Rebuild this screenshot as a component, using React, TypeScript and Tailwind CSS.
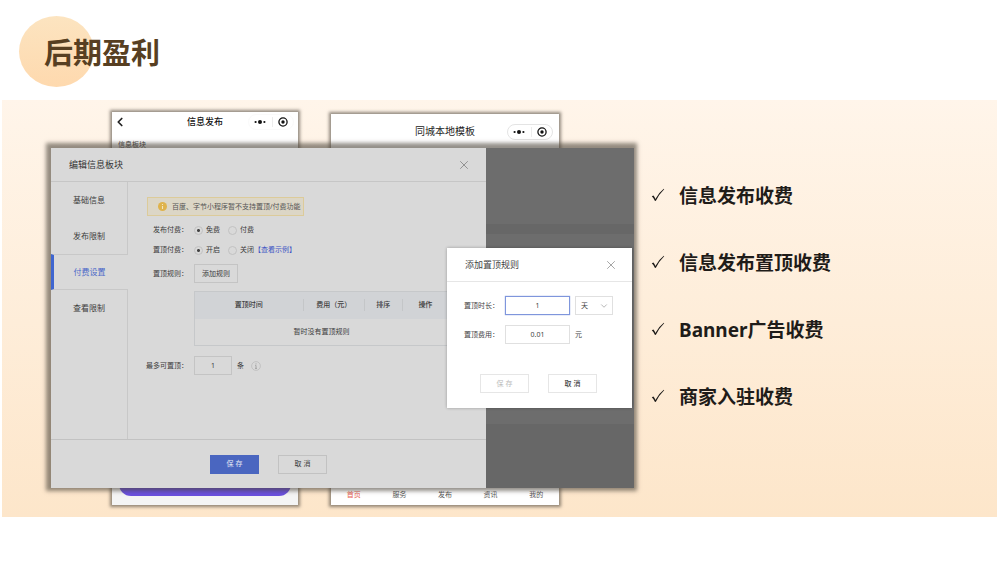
import type { ReactNode } from "react";
import { ChevronDown, ChevronLeft, X } from "lucide-react";

const benefits = ["信息发布收费", "信息发布置顶收费", "Banner广告收费", "商家入驻收费"];
const sections = ["基础信息", "发布限制", "付费设置", "查看限制"];
const tabs = ["首页", "服务", "发布", "资讯", "我的"];

const frameShadow = "shadow-[0_0_3px_2px_rgba(75,68,58,0.6)]";

function Tick() {
  return (
    <svg viewBox="0 0 14 14" className="w-3.5 h-3.5 mb-1 shrink-0" aria-hidden="true">
      <path d="M0.8 8.2 L2.4 7.4 Q3.6 8.8 4.4 11 Q7.8 4.6 12.8 0.8 L13.2 1.2 Q8 6.2 4.9 12.8 L4 13 Q2.6 9.8 0.8 8.2Z" fill="#1c1a18" />
    </svg>
  );
}

function Capsule({ outlined = false }: { outlined?: boolean }) {
  return (
    <div className={`flex items-center justify-between w-[46px] h-4 px-[5px] rounded-full border ${outlined ? "border-[#e4e4e4]" : "border-[#fafafa]"}`}>
      <svg viewBox="0 0 12 6" className="w-3 h-1.5" fill="#111" aria-hidden="true">
        <circle cx="1.6" cy="3" r="1.1" />
        <circle cx="6" cy="3" r="2" />
        <circle cx="10.4" cy="3" r="1.1" />
      </svg>
      <span className="w-px h-2.5 bg-[#ececec]" />
      <svg viewBox="0 0 10 10" className="w-2.5 h-2.5" aria-hidden="true">
        <circle cx="5" cy="5" r="4.1" fill="none" stroke="#111" strokeWidth="1.3" />
        <circle cx="5" cy="5" r="1.7" fill="#111" />
      </svg>
    </div>
  );
}

function PublishPhone() {
  return (
    <div className={`flex flex-col w-[186px] bg-[#f4f4f4] ${frameShadow}`}>
      <div className="bg-white pb-5">
        <div className="relative flex items-center justify-between h-5 pl-px">
          <button type="button" aria-label="返回">
            <ChevronLeft className="w-3.5 h-3.5 text-[#222]" strokeWidth={3} />
          </button>
          <h2 className="absolute inset-x-0 text-center text-[9px] font-medium text-[#111] pointer-events-none">信息发布</h2>
          <div className="pr-1"><Capsule /></div>
        </div>
        <p className="mt-2 pl-1.5 text-[7px] leading-[10px] text-[#444]">信息板块</p>
      </div>
      <button type="button" className="mt-auto mx-[7px] mb-[9px] h-6 rounded-full bg-[#6a50de] text-white text-[7px] leading-[10px]">
        立即发布
      </button>
    </div>
  );
}

function HomePhone() {
  return (
    <div className={`flex flex-col flex-1 mt-0.5 bg-white ${frameShadow}`}>
      <div className="relative flex items-center justify-end h-[35px] pr-1.5">
        <h2 className="absolute inset-x-0 text-center text-[10px] text-[#222]">同城本地模板</h2>
        <Capsule outlined />
      </div>
      <nav className="mt-auto flex pb-[5px]">
        {tabs.map((t, i) => (
          <a key={t} href="#" className={`flex-1 text-center text-[7px] leading-[10px] ${i === 0 ? "text-[#e8604f]" : "text-[#555]"}`}>
            {t}
          </a>
        ))}
      </nav>
    </div>
  );
}

function Row({ label, htmlFor, className = "h-5", children }: { label: string; htmlFor?: string; className?: string; children: ReactNode }) {
  return (
    <div className={`flex items-center ${className}`}>
      <label htmlFor={htmlFor} className="w-[60px] mr-1.5 shrink-0 text-right whitespace-nowrap">{label}：</label>
      {children}
    </div>
  );
}

function Radio({ name, label, checked = false }: { name: string; label: string; checked?: boolean }) {
  return (
    <label className="flex items-center gap-[3px]">
      <input
        type="radio"
        name={name}
        defaultChecked={checked}
        className="appearance-none w-[9px] h-[9px] rounded-full border border-[#c2c2c2] checked:bg-[radial-gradient(circle,#444_1px,transparent_2px)]"
      />
      {label}
    </label>
  );
}

function SettingsPanel() {
  return (
    <section className="flex flex-col flex-1 min-w-0 bg-[#d9d9d9] text-[7px] leading-[10px] text-[#3c3c3c]">
      <header className="flex items-center justify-between h-[34px] pl-[18px] pr-[15px] border-b border-[#c6c6c6]">
        <h2 className="text-[9px] text-[#333]">编辑信息板块</h2>
        <button type="button" aria-label="关闭">
          <X className="w-3.5 h-3.5 text-[#888]" strokeWidth={1.5} />
        </button>
      </header>

      <div className="flex">
        <nav className="flex flex-col w-[77px] shrink-0 text-[8px]">
          {sections.map((s) => (
            <a
              key={s}
              href="#"
              className={`flex items-center justify-center h-9 ${s === "付费设置" ? "border-y border-y-[#c8c8c8] border-l-[3px] border-l-[#3f66d0] pr-[3px] text-[#4a68c8]" : "border-r border-[#c8c8c8]"}`}
            >
              {s}
            </a>
          ))}
          <div className="flex-1 border-r border-[#c8c8c8]" />
        </nav>

        <form className="flex-1 min-w-0 pt-[15px] pb-16">
          <div className="flex items-center gap-[5px] w-fit h-[19px] ml-[19px] pl-2.5 pr-0.5 mb-1 border border-[#dccb9a] bg-[#dcd6c6] whitespace-nowrap text-[#555]">
            <svg viewBox="0 0 10 10" className="w-[9px] h-[9px]" aria-hidden="true">
              <circle cx="5" cy="5" r="5" fill="#dfb34c" />
              <path d="M5 2.2v1.2M5 4.4v3.4" stroke="#f3e6c0" strokeWidth="1.2" />
            </svg>
            百度、字节小程序暂不支持置顶/付费功能
          </div>
          <Row label="发布付费">
            <div className="flex gap-2">
              <Radio name="publish" label="免费" checked />
              <Radio name="publish" label="付费" />
            </div>
          </Row>
          <Row label="置顶付费">
            <div className="flex gap-2">
              <Radio name="top" label="开启" checked />
              <Radio name="top" label="关闭" />
            </div>
            <a href="#" className="text-[#3e55c4]">【查看示例】</a>
          </Row>
          <Row label="置顶规则" className="mt-1 h-[19px]">
            <button type="button" className="w-[44px] h-[19px] border border-[#c4c4c4]">添加规则</button>
          </Row>
          <div className="mt-2 ml-[66px] mr-[37px]">
            <table className="w-full table-fixed border-collapse border border-[#c6c8ca] text-center">
              <colgroup>
                <col className="w-[43%]" />
                <col className="w-[24%]" />
                <col className="w-[15%]" />
                <col className="w-[18%]" />
              </colgroup>
              <thead className="bg-[#d1d3d6]">
                <tr className="h-[27px]">
                  {["置顶时间", "费用（元）", "排序", "操作"].map((h, i) => (
                    <th key={h} className="p-0 font-medium whitespace-nowrap">
                      <div className={`leading-[12px] ${i < 3 ? "border-r border-[#c4c6c8]" : ""}`}>{h}</div>
                    </th>
                  ))}
                </tr>
              </thead>
              <tbody>
                <tr className="h-[27px]">
                  <td colSpan={4} className="p-0">暂时没有置顶规则</td>
                </tr>
              </tbody>
            </table>
          </div>
          <Row label="最多可置顶" htmlFor="limit" className="mt-2.5 h-[19px]">
            <input id="limit" defaultValue="1" className="w-[38px] h-[19px] border border-[#c4c4c4] text-center" />
            <span className="mx-[5px]">条</span>
            <svg viewBox="0 0 10 10" className="ml-0.5 w-2.5 h-2.5" aria-hidden="true">
              <circle cx="5" cy="5" r="4.4" fill="none" stroke="#bdbdbd" strokeWidth="0.8" />
              <path d="M5 2.4v1M4.2 4.4H5v3M4 7.4h2" stroke="#999" strokeWidth="0.8" fill="none" />
            </svg>
          </Row>
        </form>
      </div>

      <footer className="flex items-center justify-center gap-[19px] h-[49px] border-t border-[#c2c2c2]">
        <button type="button" className="w-[49px] h-[19px] bg-[#4a66c0] text-[#e4e8f4]">保 存</button>
        <button type="button" className="w-[49px] h-[19px] border border-[#c2c2c2]">取 消</button>
      </footer>
    </section>
  );
}

function RuleDialog() {
  return (
    <div role="dialog" className="absolute right-0.5 top-[100px] w-[185px] bg-white text-[7px] leading-[10px] text-[#444] shadow-[0_0_3px_rgba(0,0,0,0.3)]">
      <header className="flex items-center justify-between h-[34px] pl-[18px] pr-3.5 border-b border-[#e6e6e6]">
        <h2 className="text-[9px] text-[#444]">添加置顶规则</h2>
        <button type="button" aria-label="关闭">
          <X className="w-3.5 h-3.5 text-[#999]" strokeWidth={1.5} />
        </button>
      </header>
      <form className="flex flex-col gap-2.5 pt-3.5 pb-[15px] pl-[17px]">
        <div className="flex items-center">
          <label htmlFor="duration" className="mr-1.5">置顶时长：</label>
          <input id="duration" defaultValue="1" className="w-[65px] h-[19px] border border-[#7f96dc] text-center shadow-[0_0_1px_#7f96dc]" />
          <div className="relative ml-[5px]">
            <select aria-label="天" className="appearance-none w-[38px] h-[19px] pl-[5px] border border-[#e0e0e0] bg-white">
              <option>天</option>
            </select>
            <ChevronDown className="absolute right-1 top-[5px] w-2.5 h-2.5 text-[#aaa] pointer-events-none" strokeWidth={2} />
          </div>
        </div>
        <div className="flex items-center">
          <label htmlFor="price" className="mr-1.5">置顶费用：</label>
          <input id="price" defaultValue="0.01" className="w-[65px] h-[19px] border border-[#e0e0e0] text-center" />
          <span className="ml-[5px]">元</span>
        </div>
        <div className="flex gap-[19px] mt-5 pl-4">
          <button type="button" disabled className="w-[49px] h-[19px] border border-[#e6e6e6] text-[#bbb]">保 存</button>
          <button type="button" className="w-[49px] h-[19px] border border-[#e6e6e6] font-medium">取 消</button>
        </div>
      </form>
    </div>
  );
}

export default function App() {
  return (
    <main lang="zh-CN" className="min-h-screen bg-white font-['Noto_Sans','Noto_Sans_CJK_SC',sans-serif]">
      <header className="relative flex items-center h-[100px] pl-11 pt-1">
        <div className="absolute left-[19px] top-4 w-[75px] h-[71px] rounded-[50%] bg-linear-to-b from-[#fce4c0] to-[#fed9ae]" />
        <h1 className="relative text-[29px] leading-none font-bold text-[#573f22]">后期盈利</h1>
      </header>

      <div className="flex ml-0.5 mr-[3px] pl-[49px] py-3 bg-linear-to-b from-[#fff5ea] to-[#fde6ca]">
        <div className="relative flex-1 min-w-[583px] pt-9 pb-[17px]">
          <div className="absolute inset-0 flex gap-[33px] pl-[61px] pr-[75px]">
            <PublishPhone />
            <HomePhone />
          </div>
          <div className="relative flex shadow-[-1px_-1px_4px_4px_rgba(75,68,58,0.6)]">
            <SettingsPanel />
            <div className="flex flex-col w-[148px] bg-[#6d6d6d]">
              <div className="mt-[76px] h-2.5 bg-[#676767]" />
              <div className="mt-auto h-16 bg-[#676767]" />
            </div>
            <RuleDialog />
          </div>
        </div>

        <ul className="flex flex-col gap-10 w-[363px] shrink-0 pl-[17px] pt-[71px] text-[19px] leading-[27px] font-bold text-[#1f1c19]">
          {benefits.map((b) => (
            <li key={b} className="flex items-center gap-3.5">
              <Tick />
              {b}
            </li>
          ))}
        </ul>
      </div>
    </main>
  );
}
